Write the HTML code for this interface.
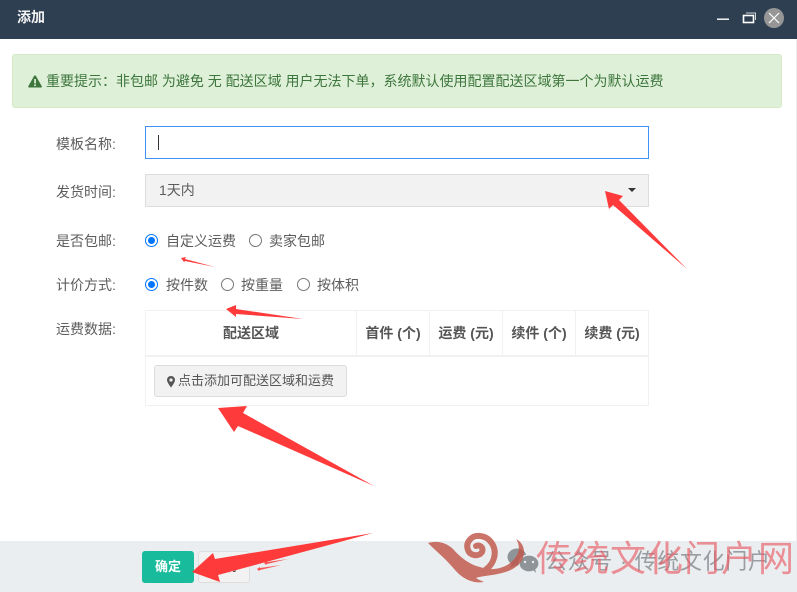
<!DOCTYPE html>
<html lang="zh">
<head>
<meta charset="utf-8">
<style>
html,body{margin:0;padding:0;background:#fff}
body{width:797px;height:592px;position:relative;overflow:hidden;font-family:"Liberation Sans","Noto Sans CJK SC",sans-serif;font-size:14px;color:#676a6c}
.a{position:absolute;white-space:nowrap}
.lab{left:56px;line-height:18px;color:#5c5c5c}
.t{color:#5c5c5c;line-height:18px}
.radio{position:absolute;width:13px;height:13px;border:1px solid #777;border-radius:50%;box-sizing:border-box;background:#fff}
.radio.on{border-color:#0075ff}
.radio.on:after{content:"";position:absolute;left:2px;top:2px;width:7px;height:7px;border-radius:50%;background:#0075ff}
.th{position:absolute;top:310px;height:45px;line-height:47px;text-align:center;font-weight:bold;color:#555;border-right:1px solid #f1f1f1;box-sizing:border-box}
</style>
</head>
<body>
<div class="a" style="left:0;top:0;width:797px;height:39px;background:#2f3f52"></div>
<div class="a" style="left:17px;top:8px;line-height:18px;font-size:14px;font-weight:bold;color:#f4f4f4">添加</div>
<svg class="a" style="left:697px;top:0" width="100" height="40">
<rect x="20" y="18.5" width="12" height="1.4" fill="#fff"/>
<rect x="46.5" y="15.5" width="10" height="7" fill="none" stroke="#fff" stroke-width="1.6"/>
<path d="M49 13h9.5v7" fill="none" stroke="#d0d5da" stroke-width="1"/>
<circle cx="77" cy="18" r="10" fill="#969696"/>
<path d="M72 13l10 10M82 13l-10 10" stroke="#fff" stroke-width="1.2"/>
</svg>

<div class="a" style="left:12px;top:54px;width:770px;height:54px;box-sizing:border-box;background:#dff0d8;border:1px solid #d6e9c6;border-radius:3px"></div>
<svg class="a" style="left:28px;top:75px" width="15" height="13"><path d="M7 0.5c.5 0 .8.3 1 .6l5.8 10.2c.3.6 0 1.2-.7 1.2H1c-.7 0-1-.6-.7-1.2L6 1.1c.2-.3.5-.6 1-.6z" fill="#3c763d"/><rect x="6.2" y="4" width="1.7" height="4.5" fill="#dff0d8"/><rect x="6.2" y="9.4" width="1.7" height="1.7" fill="#dff0d8"/></svg>
<div class="a" style="left:46px;top:72px;line-height:18px;color:#3c763d">重要提示：非包邮 为避免 无 配送区域 用户无法下单，系统默认使用配置配送区域第一个为默认运费</div>

<div class="a lab" style="top:135px">模板名称:</div>
<div class="a" style="left:145px;top:126px;width:504px;height:33px;box-sizing:border-box;border:1px solid #3f93f5;background:#fff"></div>
<div class="a" style="left:158px;top:135px;width:1px;height:15px;background:#333"></div>

<div class="a lab" style="top:183px">发货时间:</div>
<div class="a" style="left:145px;top:174px;width:504px;height:33px;box-sizing:border-box;border:1px solid #ddd;background:#f2f2f2"></div>
<div class="a t" style="left:159px;top:181px">1天内</div>
<div class="a" style="left:628px;top:188px;width:0;height:0;border-left:4.5px solid transparent;border-right:4.5px solid transparent;border-top:4.5px solid #333"></div>

<div class="a lab" style="top:232px">是否包邮:</div>
<div class="radio on" style="left:145px;top:234px"></div>
<div class="a t" style="left:166px;top:232px">自定义运费</div>
<div class="radio" style="left:249px;top:234px"></div>
<div class="a t" style="left:269px;top:232px">卖家包邮</div>

<div class="a lab" style="top:276px">计价方式:</div>
<div class="radio on" style="left:145px;top:278px"></div>
<div class="a t" style="left:166px;top:276px">按件数</div>
<div class="radio" style="left:221px;top:278px"></div>
<div class="a t" style="left:241px;top:276px">按重量</div>
<div class="radio" style="left:297px;top:278px"></div>
<div class="a t" style="left:317px;top:276px">按体积</div>

<div class="a lab" style="top:320px">运费数据:</div>
<div class="a" style="left:145px;top:310px;width:504px;height:96px;box-sizing:border-box;border:1px solid #f1f1f1"></div>
<div class="a" style="left:146px;top:355px;width:502px;height:2px;background:#f1f1f1"></div>
<div class="th" style="left:146px;width:211px">配送区域</div>
<div class="th" style="left:357px;width:73px">首件 (个)</div>
<div class="th" style="left:430px;width:73px">运费 (元)</div>
<div class="th" style="left:503px;width:73px">续件 (个)</div>
<div class="th" style="left:576px;width:72px;border-right:0">续费 (元)</div>
<div class="a" style="left:154px;top:365px;width:193px;height:32px;box-sizing:border-box;background:#f2f2f2;border:1px solid #ddd;border-radius:3px"></div>
<svg class="a" style="left:167px;top:376px" width="8" height="12"><path d="M4 0C1.8 0 0 1.7 0 3.9 0 6.6 4 11.5 4 11.5S8 6.6 8 3.9C8 1.7 6.2 0 4 0z" fill="#555"/><circle cx="4" cy="4" r="1.6" fill="#f2f2f2"/></svg>
<div class="a" style="left:178px;top:372px;line-height:18px;font-size:13px;color:#555">点击添加可配送区域和运费</div>

<div class="a" style="left:0;top:541px;width:797px;height:51px;background:#ebeef0"></div>
<div class="a" style="left:142px;top:551px;width:52px;height:32px;border-radius:3px;background:#18bc9c;color:#fff;font-size:13px;font-weight:bold;line-height:31px;text-align:center">确定</div>
<div class="a" style="left:198px;top:551px;width:52px;height:32px;box-sizing:border-box;border-radius:3px;background:#f2f2f2;border:1px solid #ddd;color:#444;font-size:13px;line-height:30px;text-align:center">取消</div>
<div class="a" style="left:796px;top:39px;width:1px;height:502px;background:#eee"></div>

<svg class="a" style="left:0;top:0" width="797" height="592">
<g fill="#fe3a3a">
<polygon points="605,191 623,196 619,200 687,269 613,205 609,209"/>
<polygon points="181,258 186,257 185,259 215,267 185,261 184,262"/>
<polygon points="226,309 236,305 236,309 303,319 236,314 236,317"/>
<polygon points="218,408 247,406 243,413 374,486 238,426 234,432"/>
<polygon points="192,572 213,553 215,559 373,533 218,575 220,582"/>
<polygon points="264,563 267,561 267,562 288,559 267,564 266,565" opacity=".85"/>
<polygon points="257,569 260,567 260,568 281,565 260,570 259,571" opacity=".85"/>
</g>
<!-- wechat icon -->
<g fill="#8f9498">
<ellipse cx="517" cy="557" rx="9.5" ry="8.5"/>
<path d="M512 563l-2 5 6-3z"/>
<ellipse cx="529" cy="563.5" rx="10" ry="8.5" stroke="#ebeef0" stroke-width="1.2"/>
<path d="M533 570l3 3-1-5z"/>
</g>
<circle cx="525" cy="562" r="1.2" fill="#ebeef0"/><circle cx="533" cy="562" r="1.2" fill="#ebeef0"/>
<text x="545" y="569" font-size="22" fill="#8c9094" opacity=".85" font-family="'Liberation Sans','Noto Sans CJK SC',sans-serif" textLength="225">公众号 · 传统文化门户</text>
<!-- swirl logo -->
<g opacity=".82">
<path fill="#c0564a" d="M428 543C438 540 447 543 453 549C460 557 470 565 480 567C493 572 510 568 517 555C520 549 519 543 516 539C524 543 526 552 522 560C516 570 505 573 492 575C485 576 478 577 476 578C479 580 482 581 484 582C472 584 462 578 455 570C447 560 437 552 428 543Z"/>
<path fill="none" stroke="#c0564a" stroke-width="6" stroke-linecap="round" d="M476 546C480 544 484 548 482 552C479 557 470 556 468 550C465 542 472 535 480 536C490 537 497 547 494 558C492 565 488 568 484 571"/>
</g>
<text x="536" y="571" font-size="36" fill="#ea5b66" opacity=".65" font-family="'Liberation Sans','Noto Sans CJK SC',sans-serif" textLength="258">传统文化门户网</text>
</svg>
</body>
</html>
